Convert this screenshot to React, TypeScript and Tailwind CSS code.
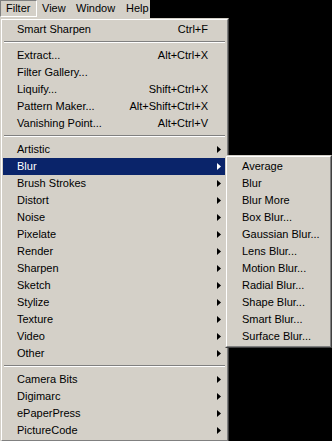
import React from "react";

type Item =
  | { type: "sep" }
  | { type: "item"; label: string; shortcut?: string; sub?: boolean; active?: boolean };

const items: Item[] = [
  { type: "item", label: "Smart Sharpen", shortcut: "Ctrl+F" },
  { type: "sep" },
  { type: "item", label: "Extract...", shortcut: "Alt+Ctrl+X" },
  { type: "item", label: "Filter Gallery..." },
  { type: "item", label: "Liquify...", shortcut: "Shift+Ctrl+X" },
  { type: "item", label: "Pattern Maker...", shortcut: "Alt+Shift+Ctrl+X" },
  { type: "item", label: "Vanishing Point...", shortcut: "Alt+Ctrl+V" },
  { type: "sep" },
  { type: "item", label: "Artistic", sub: true },
  { type: "item", label: "Blur", sub: true, active: true },
  { type: "item", label: "Brush Strokes", sub: true },
  { type: "item", label: "Distort", sub: true },
  { type: "item", label: "Noise", sub: true },
  { type: "item", label: "Pixelate", sub: true },
  { type: "item", label: "Render", sub: true },
  { type: "item", label: "Sharpen", sub: true },
  { type: "item", label: "Sketch", sub: true },
  { type: "item", label: "Stylize", sub: true },
  { type: "item", label: "Texture", sub: true },
  { type: "item", label: "Video", sub: true },
  { type: "item", label: "Other", sub: true },
  { type: "sep" },
  { type: "item", label: "Camera Bits", sub: true },
  { type: "item", label: "Digimarc", sub: true },
  { type: "item", label: "ePaperPress", sub: true },
  { type: "item", label: "PictureCode", sub: true },
];

const subItems = [
  "Average",
  "Blur",
  "Blur More",
  "Box Blur...",
  "Gaussian Blur...",
  "Lens Blur...",
  "Motion Blur...",
  "Radial Blur...",
  "Shape Blur...",
  "Smart Blur...",
  "Surface Blur...",
];

function Arrow({ white }: { white?: boolean }) {
  return (
    <svg width="4" height="7" viewBox="0 0 4 7" className="block">
      <path d="M0 0 L4 3.5 L0 7 Z" fill={white ? "#ffffff" : "#000000"} />
    </svg>
  );
}

function Separator() {
  return (
    <div className="h-[9px] flex flex-col justify-start pt-[3px] px-[1px]">
      <div className="h-[1px] bg-[#808080]" />
      <div className="h-[1px] bg-white" />
    </div>
  );
}

function Bevel({ children, className }: { children: React.ReactNode; className?: string }) {
  return (
    <div
      className={
        "border border-t-[#d4d0c8] border-l-[#d4d0c8] border-r-[#404040] border-b-[#404040] bg-[#d4d0c8] " +
        (className || "")
      }
    >
      <div className="border border-t-white border-l-white border-r-[#808080] border-b-[#808080] h-full">
        {children}
      </div>
    </div>
  );
}

export default function App() {
  return (
    <div
      className="relative w-[332px] h-[441px] bg-black overflow-hidden text-[11px] leading-none text-black"
      style={{ fontFamily: '"Liberation Sans", Arial, sans-serif' }}
    >
      {/* Menu bar */}
      <div className="flex h-[18px] w-[150px] bg-[#d4d0c8] items-start">
        <div className="h-[17px] w-[37px] border border-t-[#808080] border-l-[#808080] border-b-white border-r-white flex items-center pl-[5px]">
          Filter
        </div>
        <div className="h-[17px] flex items-center pl-[5px] w-[35px]">View</div>
        <div className="h-[17px] flex items-center pl-[4px] w-[49px]">Window</div>
        <div className="h-[17px] flex items-center pl-[5px]">Help</div>
      </div>

      {/* Main menu */}
      <Bevel className="w-[229px]">
        <div className="py-[1px] px-[1px]">
          {items.map((it, i) =>
            it.type === "sep" ? (
              <Separator key={i} />
            ) : (
              <div
                key={i}
                className={
                  "h-[17px] flex items-center pl-[14px] pr-[5px] " +
                  (it.active ? "bg-[#0a246a] text-white" : "")
                }
              >
                <span className="flex-1 whitespace-nowrap">{it.label}</span>
                {it.shortcut && <span className="whitespace-nowrap mr-[13px]">{it.shortcut}</span>}
                {it.sub && <Arrow white={it.active} />}
              </div>
            )
          )}
        </div>
      </Bevel>

      {/* Submenu */}
      <div className="absolute left-[225px] top-[155px]">
        <Bevel className="w-[107px]">
          <div className="py-[1px] px-[1px]">
            {subItems.map((s) => (
              <div key={s} className="h-[17px] flex items-center pl-[14px] whitespace-nowrap">
                {s}
              </div>
            ))}
          </div>
        </Bevel>
      </div>
    </div>
  );
}
